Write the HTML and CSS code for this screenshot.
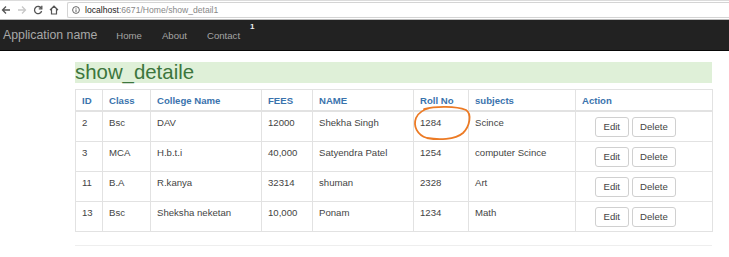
FILE: index.html
```html
<!DOCTYPE html>
<html lang="en">
<head>
    <meta charset="UTF-8">
    <meta name="viewport" content="width=device-width, initial-scale=1.0">
    <title>show_detail1</title>
    <link rel="stylesheet" href="styles.css">
</head>
<body>
    <!-- browser toolbar -->
    <div class="browser-bar">
        <div class="tool-icons">
            <svg class="tool" width="10" height="10" viewBox="0 0 10 10"><path d="M9 5H1.5M5 1.5L1.5 5L5 8.5" fill="none" stroke="#555" stroke-width="1.3"/></svg>
            <svg class="tool" width="10" height="10" viewBox="0 0 10 10"><path d="M1 5H8.5M5 1.5L8.5 5L5 8.5" fill="none" stroke="#c8c8c8" stroke-width="1.3"/></svg>
            <svg class="tool" width="10" height="10" viewBox="0 0 10 10"><path d="M8.2 3.2A3.6 3.6 0 1 0 8.6 6" fill="none" stroke="#555" stroke-width="1.3"/><path d="M8.8 0.8V3.8H5.8" fill="none" stroke="#555" stroke-width="1.3"/></svg>
            <svg class="tool" width="10" height="10" viewBox="0 0 10 10"><path d="M1 5L5 1.2L9 5M2.5 4V9H7.5V4" fill="none" stroke="#555" stroke-width="1.2"/></svg>
        </div>
        <div class="address">
            <svg width="8" height="8" viewBox="0 0 8 8"><circle cx="4" cy="4" r="3.4" fill="none" stroke="#555" stroke-width="0.9"/><path d="M4 3.4V6M4 2V2.7" stroke="#555" stroke-width="0.9"/></svg>
            <span class="host">localhost</span><span class="path">:6671/Home/show_detail1</span>
        </div>
    </div>

    <div class="navbar">
        <span class="brand">Application name</span>
        <a href="#" class="nav-link">Home</a>
        <a href="#" class="nav-link">About</a>
        <a href="#" class="nav-link">Contact</a>
        <span class="nav-count">1</span>
    </div>

    <div class="container">
        <h2 class="title">show_detaile</h2>

        <table class="table">
            <colgroup>
                <col style="width: 27px">
                <col style="width: 48px">
                <col style="width: 111px">
                <col style="width: 51px">
                <col style="width: 101px">
                <col style="width: 55px">
                <col style="width: 107px">
                <col style="width: 137px">
            </colgroup>
            <thead>
                <tr>
                    <th>ID</th>
                    <th>Class</th>
                    <th>College Name</th>
                    <th>FEES</th>
                    <th>NAME</th>
                    <th>Roll No</th>
                    <th>subjects</th>
                    <th>Action</th>
                </tr>
            </thead>
            <tbody id="student-rows">
            </tbody>
        </table>

        <!-- hand drawn mark round the roll number -->
        <svg class="mark" width="60" height="36" viewBox="0 0 60 36">
            <path d="M12 4C24 1 44 1 54 5C60 9 58 21 51 28C43 35 26 35 15 33C5 30 1 21 4 13C6 8 10 5 18 3" fill="none" stroke="#ec7a24" stroke-width="1.8" stroke-linecap="round"/>
        </svg>

        <hr class="footer-line">
    </div>

    <script>
        const students = [
            { id: 2, cls: "Bsc", college: "DAV", fees: "12000", name: "Shekha Singh", roll: "1284", subject: "Scince" },
            { id: 3, cls: "MCA", college: "H.b.t.i", fees: "40,000", name: "Satyendra Patel", roll: "1254", subject: "computer Scince" },
            { id: 11, cls: "B.A", college: "R.kanya", fees: "32314", name: "shuman", roll: "2328", subject: "Art" },
            { id: 13, cls: "Bsc", college: "Sheksha neketan", fees: "10,000", name: "Ponam", roll: "1234", subject: "Math" }
        ];

        const body = document.getElementById('student-rows');
        students.forEach(s => {
            const row = document.createElement('tr');
            row.innerHTML = `
                <td>${s.id}</td>
                <td>${s.cls}</td>
                <td>${s.college}</td>
                <td>${s.fees}</td>
                <td>${s.name}</td>
                <td>${s.roll}</td>
                <td>${s.subject}</td>
                <td class="actions"><button class="btn">Edit</button><button class="btn">Delete</button></td>
            `;
            body.appendChild(row);
        });
    </script>
</body>
</html>
```

FILE: styles.css
```css
body {
    margin: 0;
    font-family: "Liberation Sans", Arial, sans-serif;
    font-size: 9.6px;
    color: #444;
    background: #fff;
}
.browser-bar {
    height: 19px;
    display: flex;
    align-items: center;
    background: #fff;
    border-top: 1px solid #dcdcdc;
    box-sizing: border-box;
}
.tool-icons {
    display: flex;
    align-items: center;
    gap: 6px;
    padding-left: 1px;
    width: 66px;
}
.tool {
    display: block;
}
.address {
    flex: 1;
    height: 16px;
    display: flex;
    align-items: center;
    gap: 5px;
    padding-left: 4px;
    border: 1px solid #d4d4d4;
    border-right: none;
    border-radius: 2px 0 0 2px;
    box-sizing: border-box;
    font-size: 8.6px;
}
.host {
    color: #222;
}
.path {
    color: #888;
    margin-left: -5px;
}
.navbar {
    height: 32px;
    display: flex;
    align-items: center;
    background: #222;
    border-top: 1px solid #bbb;
    border-bottom: 1px solid #080808;
    box-sizing: border-box;
}
.brand {
    font-size: 12.3px;
    color: #a8a8a8;
    padding: 0 9px 0 3px;
}
.nav-link {
    color: #a5a5a5;
    text-decoration: none;
    padding: 0 10px;
}
.nav-count {
    align-self: flex-start;
    margin-top: 2px;
    color: #eee;
    font-weight: bold;
    font-size: 8px;
}
.container {
    position: relative;
    width: 637px;
    margin: 11px 0 0 75px;
}
.title {
    margin: 0 0 6px;
    height: 21px;
    line-height: 20px;
    font-size: 20.4px;
    font-weight: normal;
    color: #3c763d;
    background: #dff0d8;
}
.table {
    width: 637px;
    table-layout: fixed;
    border-collapse: collapse;
    border: 1px solid #e2e2e2;
}
.table th, .table td {
    border: 1px solid #e2e2e2;
    padding: 5px 6px 4px;
    line-height: 12px;
    text-align: left;
    vertical-align: top;
}
.table th {
    color: #3a73ad;
    font-weight: bold;
    border-bottom-width: 2px;
    padding-bottom: 3px;
}
.table td.actions {
    padding-left: 19px;
    font-size: 0;
    line-height: 0;
}
.btn {
    display: inline-block;
    vertical-align: top;
    height: 20px;
    padding: 0 7.5px;
    margin-right: 3px;
    font-family: inherit;
    font-size: 9.6px;
    line-height: 18px;
    color: #444;
    background: #fff;
    border: 1px solid #d0d0d0;
    border-radius: 3px;
}
.mark {
    position: absolute;
    left: 337px;
    top: 43px;
}
.footer-line {
    margin: 13px 0 0;
    border: 0;
    border-top: 1px solid #eee;
}
```
